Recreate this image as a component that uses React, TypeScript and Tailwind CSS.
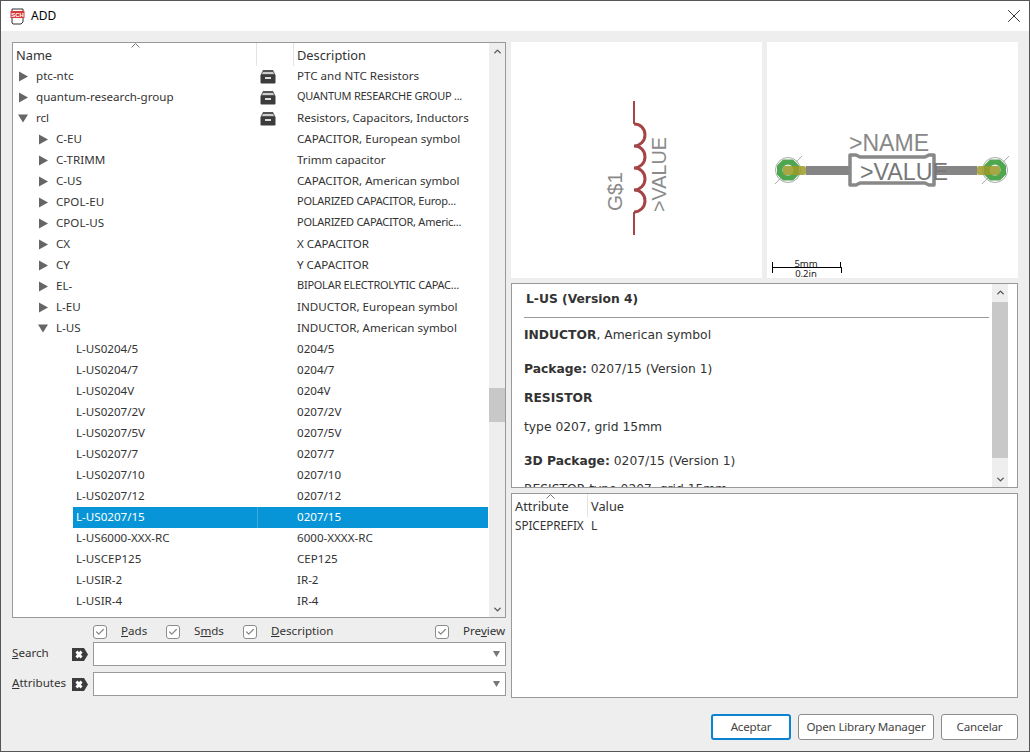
import { X, ChevronUp, ChevronDown, Check } from 'lucide-react'

const FONT = "font-['Noto_Sans',sans-serif]"

interface Row {
  name: string
  desc: string
  depth: 0 | 1 | 2
  state?: 'closed' | 'open'
  lib?: boolean
  small?: boolean
  selected?: boolean
}

const rows: Row[] = [
  { name: 'ptc-ntc', desc: 'PTC and NTC Resistors', depth: 0, state: 'closed', lib: true },
  { name: 'quantum-research-group', desc: 'QUANTUM RESEARCHE GROUP ...', depth: 0, state: 'closed', lib: true, small: true },
  { name: 'rcl', desc: 'Resistors, Capacitors, Inductors', depth: 0, state: 'open', lib: true },
  { name: 'C-EU', desc: 'CAPACITOR, European symbol', depth: 1, state: 'closed' },
  { name: 'C-TRIMM', desc: 'Trimm capacitor', depth: 1, state: 'closed' },
  { name: 'C-US', desc: 'CAPACITOR, American symbol', depth: 1, state: 'closed' },
  { name: 'CPOL-EU', desc: 'POLARIZED CAPACITOR, Europ...', depth: 1, state: 'closed', small: true },
  { name: 'CPOL-US', desc: 'POLARIZED CAPACITOR, Americ...', depth: 1, state: 'closed', small: true },
  { name: 'CX', desc: 'X CAPACITOR', depth: 1, state: 'closed' },
  { name: 'CY', desc: 'Y CAPACITOR', depth: 1, state: 'closed' },
  { name: 'EL-', desc: 'BIPOLAR ELECTROLYTIC CAPAC...', depth: 1, state: 'closed', small: true },
  { name: 'L-EU', desc: 'INDUCTOR, European symbol', depth: 1, state: 'closed' },
  { name: 'L-US', desc: 'INDUCTOR, American symbol', depth: 1, state: 'open' },
  { name: 'L-US0204/5', desc: '0204/5', depth: 2 },
  { name: 'L-US0204/7', desc: '0204/7', depth: 2 },
  { name: 'L-US0204V', desc: '0204V', depth: 2 },
  { name: 'L-US0207/2V', desc: '0207/2V', depth: 2 },
  { name: 'L-US0207/5V', desc: '0207/5V', depth: 2 },
  { name: 'L-US0207/7', desc: '0207/7', depth: 2 },
  { name: 'L-US0207/10', desc: '0207/10', depth: 2 },
  { name: 'L-US0207/12', desc: '0207/12', depth: 2 },
  { name: 'L-US0207/15', desc: '0207/15', depth: 2, selected: true },
  { name: 'L-US6000-XXX-RC', desc: '6000-XXXX-RC', depth: 2 },
  { name: 'L-USCEP125', desc: 'CEP125', depth: 2 },
  { name: 'L-USIR-2', desc: 'IR-2', depth: 2 },
  { name: 'L-USIR-4', desc: 'IR-4', depth: 2 },
]

function Arrow({ open }: { open: boolean }) {
  return (
    <svg width="11" height="11" viewBox="0 0 11 11" className="shrink-0">
      {open ? <path d="M0 1.5H10L5 9.5Z" fill="#666" /> : <path d="M1 0.5L10 5.5L1 10.5Z" fill="#666" />}
    </svg>
  )
}

function DrawerIcon() {
  return (
    <svg width="16" height="15" viewBox="0 0 16 15">
      <path d="M3 1H13L15.5 6H0.5Z" fill="#555" />
      <path d="M3 3H13L14 5H2Z" fill="#ccc" />
      <path d="M0.5 6H15.5V13.5Q15.5 14.5 14.5 14.5H1.5Q0.5 14.5 0.5 13.5Z" fill="#3c3c3c" />
      <rect x="5" y="8" width="6" height="2" fill="#ddd" />
    </svg>
  )
}

function TreeRow({ row }: { row: Row }) {
  const indent = row.depth === 0 ? 'pl-[5px]' : row.depth === 1 ? 'pl-[25px]' : 'pl-[60px]'
  const gap = row.depth === 2 ? '' : 'gap-[7px]'
  return (
    <div className="flex h-[21px] shrink-0 items-center pr-[1px] text-[11.6px]">
      <div className={`flex h-full w-[244px] shrink-0 items-center ${gap} ${indent}`}>
        {row.state && <Arrow open={row.state === 'open'} />}
        <span className={row.selected ? 'flex h-full flex-1 items-center bg-[#0795d8] pb-[2px] pl-[3px] text-white' : row.depth === 2 ? 'pb-[2px] pl-[3px]' : 'pb-[2px]'}>
          {row.name}
        </span>
      </div>
      <div className={`flex h-full w-[37px] shrink-0 items-center pl-[3px] ${row.selected ? 'border-l border-[#3aa9e0] bg-[#0795d8]' : ''}`}>
        {row.lib && <DrawerIcon />}
      </div>
      <div
        className={`flex h-full flex-1 items-center overflow-hidden whitespace-nowrap pb-[2px] pl-[3px] ${row.small ? 'text-[11px] tracking-[-0.25px]' : ''} ${row.selected ? 'bg-[#0795d8] text-white' : ''}`}
      >
        {row.desc}
      </div>
    </div>
  )
}

function ScrollBar({ thumbTop, thumbHeight }: { thumbTop: string; thumbHeight: string }) {
  return (
    <div className="flex w-[16px] shrink-0 flex-col bg-[#eeeeee] text-[#555]">
      <div className="flex h-[16px] shrink-0 items-center justify-center">
        <ChevronUp size={11} strokeWidth={3} />
      </div>
      <div className="flex-1">
        <div className={`w-full bg-[#c8c8c8] ${thumbTop} ${thumbHeight}`} />
      </div>
      <div className="flex h-[16px] shrink-0 items-center justify-center">
        <ChevronDown size={11} strokeWidth={3} />
      </div>
    </div>
  )
}

function SortCaret({ className }: { className: string }) {
  return (
    <svg width="9" height="5" viewBox="0 0 9 5" className={`absolute ${className}`}>
      <path d="M0.5 4.5L4.5 0.5L8.5 4.5" fill="none" stroke="#777" />
    </svg>
  )
}

function Option({ mnemonic, rest, before, width }: { mnemonic: string; rest: string; before?: string; width: string }) {
  return (
    <label className={`flex items-center ${width}`}>
      <span className="flex h-[14px] w-[14px] shrink-0 items-center justify-center rounded-[3px] border border-[#8c8c8c] bg-white text-[#888]">
        <Check size={10} strokeWidth={3} />
      </span>
      <span className="ml-[14px] whitespace-nowrap pb-[2px]">
        {before}
        <u>{mnemonic}</u>
        {rest}
      </span>
    </label>
  )
}

function ClearIcon() {
  return (
    <svg width="16" height="13" viewBox="0 0 16 13" className="shrink-0">
      <path d="M0 0H12L16 6.5L12 13H0Z" fill="#3c3c3c" />
      <path d="M4.5 3.5L9.5 9.5M9.5 3.5L4.5 9.5" stroke="#fff" strokeWidth="2.8" />
    </svg>
  )
}

function Combo() {
  return (
    <div className="flex h-[24px] flex-1 items-center justify-end border border-[#999] bg-white pr-[5px]">
      <svg width="7" height="6" viewBox="0 0 7 6">
        <path d="M0 0H7L3.5 6Z" fill="#777" />
      </svg>
    </div>
  )
}

function SymbolPreview() {
  return (
    <div className="h-[236px] w-[251px] shrink-0 bg-white">
      <svg width="251" height="236" viewBox="511 42 251 236" className="block">
        <path d="M634 101V124" stroke="#a54545" strokeWidth="2" fill="none" />
        <path d="M634 212V235" stroke="#a54545" strokeWidth="2" fill="none" />
        <path
          d="M634 124C640 124 645 128 645 135C645 141 640 146 634 146C640 146 645 150 645 157C645 163 640 168 634 168C640 168 645 172 645 179C645 185 640 190 634 190C640 190 645 194 645 201C645 207 640 212 634 212"
          stroke="#a54545"
          strokeWidth="3"
          fill="none"
        />
        <text
          transform="translate(622 211) rotate(-90)"
          fill="#8a8a8a"
          fontSize="20"
          fontFamily="Liberation Sans, sans-serif"
          textLength="39"
          lengthAdjust="spacingAndGlyphs"
        >
          G$1
        </text>
        <text
          transform="translate(666 212) rotate(-90)"
          fill="#8a8a8a"
          fontSize="20"
          fontFamily="Liberation Sans, sans-serif"
          textLength="75"
          lengthAdjust="spacingAndGlyphs"
        >
          &gt;VALUE
        </text>
      </svg>
    </div>
  )
}

function Pad({ cx, dir }: { cx: number; dir: 1 | -1 }) {
  return (
    <g>
      <circle cx={cx} cy={170} r={12.5} fill="none" stroke="#aaa" strokeWidth="1" />
      <path d={`M${cx - 13} 184L${cx + 14} 156`} stroke="#aaa" strokeWidth="1" />
      <path
        d={`M${cx - 5} 159.5H${cx + 5}L${cx + 11} 165.5V174.5L${cx + 5} 180.5H${cx - 5}L${cx - 11} 174.5V165.5Z`}
        fill="#4ea64e"
      />
      <circle cx={cx} cy={170} r={5.5} fill="#e4eee4" />
      <rect x={dir > 0 ? cx - 5 : cx - 18} y={166} width={23} height={9} rx={2} fill="#9c9a28" fillOpacity="0.85" />
    </g>
  )
}

function FootprintPreview() {
  return (
    <div className="h-[236px] w-[251px] shrink-0 bg-white">
      <svg width="251" height="236" viewBox="767 42 251 236" className="block">
        <rect x="806" y="166" width="44" height="9" fill="#858585" />
        <rect x="935" y="166" width="42" height="9" fill="#858585" />
        <Pad cx={788} dir={1} />
        <Pad cx={995} dir={-1} />
        <path
          d="M850 155H856L860 157H925L929 155H934V185H929L925 183H860L856 185H850Z"
          fill="none"
          stroke="#888"
          strokeWidth="3.5"
          strokeLinejoin="round"
        />
        <text x="849" y="151" fill="#888" fontSize="24" fontFamily="Liberation Sans, sans-serif" textLength="80" lengthAdjust="spacingAndGlyphs">
          &gt;NAME
        </text>
        <text x="860" y="180" fill="#777" fontSize="24" fontFamily="Liberation Sans, sans-serif" textLength="88" lengthAdjust="spacingAndGlyphs">
          &gt;VALUE
        </text>
        <path d="M772.5 262V273M772.5 267.5H841M840.5 262V267M841.5 267V273" stroke="#000" strokeWidth="1" fill="none" />
        <text x="806" y="266.5" textAnchor="middle" fill="#222" fontSize="9.5" fontFamily="Noto Sans, sans-serif">
          5mm
        </text>
        <text x="806" y="277" textAnchor="middle" fill="#222" fontSize="9.5" fontFamily="Noto Sans, sans-serif">
          0.2in
        </text>
      </svg>
    </div>
  )
}

function FootBtn({ children, primary, width }: { children: string; primary?: boolean; width: string }) {
  return (
    <button
      className={`h-[26px] rounded-[3px] bg-white text-[11.6px] tracking-[-0.2px] text-[#444] ${width} ${primary ? 'border-2 border-[#0a84d0]' : 'border border-[#8c8c8c]'}`}
    >
      {children}
    </button>
  )
}

export default function App() {
  return (
    <div className={`flex h-[752px] w-[1030px] flex-col overflow-hidden border border-[#555] bg-[#eeeeee] text-[#333] ${FONT}`}>
      <div className="flex h-[30px] shrink-0 items-center bg-white pl-[9px] pr-[4px] text-[12px] text-black">
        <svg width="15" height="17" viewBox="0 0 15 17" className="shrink-0">
          <path d="M2 1H13V14L11 16H3L2 15Z" fill="#fff" stroke="#333" />
          <rect x="0.5" y="3" width="14" height="7" fill="#d63a3a" />
          <text x="7.5" y="9" textAnchor="middle" fontSize="6" fontWeight="700" fill="#fff" fontFamily="Liberation Sans, sans-serif">
            SCH
          </text>
        </svg>
        <span className="ml-[6px]">ADD</span>
        <X size={22} strokeWidth={1} className="ml-auto text-[#222]" />
      </div>

      <div className="flex min-h-0 flex-1 gap-[5px] pl-[11px] pr-[11px] pt-[11px]">
        <div className="flex w-[494px] shrink-0 flex-col">
          <div className="flex h-[576px] shrink-0 border border-[#999] bg-white">
            <div className="flex min-w-0 flex-1 flex-col overflow-hidden">
              <div className="relative flex h-[23px] shrink-0 items-center text-[12.8px]">
                <SortCaret className="left-[118px] top-0" />
                <div className="flex h-full w-[244px] shrink-0 items-center border-r border-[#e4e4e4] pl-[3px] pt-[2px]">Name</div>
                <div className="h-full w-[37px] shrink-0 border-r border-[#e4e4e4]" />
                <div className="flex h-full items-center pl-[3px] pt-[2px]">Description</div>
              </div>
              {rows.map(row => (
                <TreeRow key={row.name} row={row} />
              ))}
            </div>
            <ScrollBar thumbTop="mt-[329px]" thumbHeight="h-[34px]" />
          </div>

          <div className="mt-[6px] flex h-[15px] shrink-0 items-center pl-[81px] text-[11.6px]">
            <Option mnemonic="P" rest="ads" width="w-[73px]" />
            <Option mnemonic="m" before="S" rest="ds" width="w-[77px]" />
            <Option mnemonic="D" rest="escription" width="w-[192px]" />
            <Option mnemonic="v" before="Pre" rest="iew" width="" />
          </div>

          <div className="mt-[3px] flex h-[24px] shrink-0 items-center text-[11.6px]">
            <span className="w-[60px] shrink-0 pb-[2px]">
              <u>S</u>earch
            </span>
            <ClearIcon />
            <div className="ml-[5px] flex flex-1">
              <Combo />
            </div>
          </div>
          <div className="mt-[6px] flex h-[24px] shrink-0 items-center text-[11.6px]">
            <span className="w-[60px] shrink-0 pb-[2px]">
              <u>A</u>ttributes
            </span>
            <ClearIcon />
            <div className="ml-[5px] flex flex-1">
              <Combo />
            </div>
          </div>
        </div>

        <div className="flex w-[507px] shrink-0 flex-col">
          <div className="flex shrink-0 gap-[5px]">
            <SymbolPreview />
            <FootprintPreview />
          </div>

          <div className="mt-[5px] flex h-[205px] shrink-0 border border-[#999] bg-white pr-[9px]">
            <div className="min-w-0 flex-1 overflow-hidden pl-[12px] pr-[3px] font-['DejaVu_Sans',sans-serif] text-[12.3px] leading-[20px]">
              <div className="border-b border-[#999] pb-[8px] pl-[2px] pt-[5px] font-bold">L-US (Version 4)</div>
              <p className="mt-[7px]">
                <b>INDUCTOR</b>, American symbol
              </p>
              <p className="mt-[14px]">
                <b>Package:</b> 0207/15 (Version 1)
              </p>
              <p className="mt-[9px] font-bold">RESISTOR</p>
              <p className="mt-[9px]">type 0207, grid 15mm</p>
              <p className="mt-[14px]">
                <b>3D Package:</b> 0207/15 (Version 1)
              </p>
              <p className="mt-[8px]">RESISTOR type 0207, grid 15mm</p>
            </div>
            <ScrollBar thumbTop="mt-[2px]" thumbHeight="h-[156px]" />
          </div>

          <div className="mt-[5px] flex h-[205px] shrink-0 flex-col border border-[#999] bg-white text-[12px]">
            <div className="relative flex h-[23px] shrink-0 items-center text-[12.8px]">
              <SortCaret className="left-[34px] top-0" />
              <div className="flex h-full w-[76px] shrink-0 items-center border-r border-[#e4e4e4] pl-[3px] pt-[2px]">Attribute</div>
              <div className="flex h-full items-center pl-[3px] pt-[2px]">Value</div>
            </div>
            <div className="flex h-[18px] items-center">
              <span className="w-[76px] shrink-0 pl-[3px] text-[11.8px] tracking-[-0.1px]">SPICEPREFIX</span>
              <span className="pl-[3px]">L</span>
            </div>
          </div>
        </div>
      </div>

      <div className="flex h-[37px] shrink-0 items-start justify-end gap-[7px] pr-[11px]">
        <FootBtn primary width="w-[80px]">Aceptar</FootBtn>
        <FootBtn width="w-[136px]">Open Library Manager</FootBtn>
        <FootBtn width="w-[77px]">Cancelar</FootBtn>
      </div>
    </div>
  )
}
